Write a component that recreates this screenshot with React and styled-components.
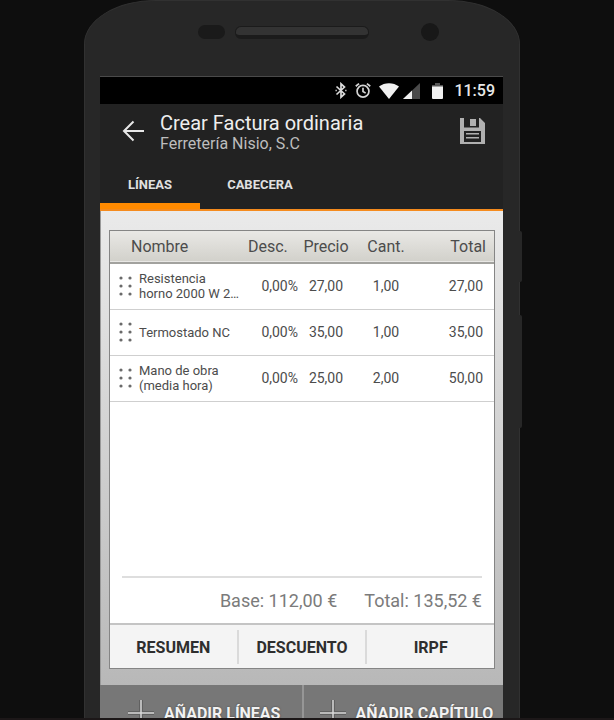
import styled, { createGlobalStyle } from "styled-components";

const GlobalStyle = createGlobalStyle`
  * {
    box-sizing: border-box;
  }

  body {
    margin: 0;
    background: #0e0e0e;
    font-family: Roboto, "Liberation Sans", sans-serif;
  }

  button {
    margin: 0;
    padding: 0;
    border: 0;
    background: none;
    font-family: inherit;
    cursor: pointer;
  }
`;

const Page = styled.div`
  height: 100vh;
  overflow: hidden;
  padding: 0 94px 0 84px;
  border-bottom: 2px solid #1c1718;
`;

const Phone = styled.div`
  position: relative;
  padding: 0 16px 0 15px;
  border: solid #313131;
  border-width: 1px 1px 0;
  border-radius: 72px 72px 0 0 / 44px 44px 0 0;
  background: #272727;
`;

const SideButton = styled.span`
  position: absolute;
  left: 100%;
  top: ${({ $top }) => $top}px;
  width: 3px;
  height: ${({ $height }) => $height}px;
  border-radius: 0 2px 2px 0;
  background: #272727;
`;

const Bezel = styled.div`
  display: flex;
  align-items: center;
  height: 75px;
  padding: 0 64px 14px 98px;
`;

const Sensor = styled.span`
  width: 27px;
  height: 14px;
  border-radius: 7px;
  background: #1a1a1a;
`;

const Speaker = styled.span`
  flex-grow: 1;
  height: 13px;
  margin: 2px 52px 0 10px;
  border: 1px solid #1b1b1b;
  border-bottom-width: 4px;
  border-radius: 6px;
  background: #333;
`;

const Camera = styled.span`
  width: 18px;
  height: 18px;
  border-radius: 50%;
  background: #181818;
`;

const Screen = styled.div`
  border-top: 1px solid #4a4a4a;
  background: #222;
`;

const StatusBar = styled.div`
  display: flex;
  justify-content: flex-end;
  align-items: center;
  height: 27px;
  padding-right: 8px;
  background: #000;
  color: #e8e8e8;
  font-size: 16px;
  font-weight: 500;

  svg {
    display: block;
  }
`;

const StatusIcons = styled.div`
  display: flex;
  align-items: center;
  gap: 8px;
  margin-right: 10px;
`;

const Network = styled.span`
  display: flex;
  gap: 4px;
`;

const AppBar = styled.header`
  display: flex;
  align-items: center;
  height: 54px;
  padding: 0 18px 0 22px;
`;

const IconButton = styled.button`
  display: block;

  svg {
    display: block;
  }
`;

const Heading = styled.div`
  flex-grow: 1;
  padding: 4px 0 0 16px;
`;

const Title = styled.h1`
  margin: 0;
  color: #eee;
  font-size: 20px;
  font-weight: 400;
  line-height: 22px;
`;

const Subtitle = styled.div`
  color: #bdbdbd;
  font-size: 16px;
  line-height: 20px;
`;

const Tabs = styled.nav`
  display: flex;
  padding-top: 8px;
  border-bottom: 2px solid #f58b1e;
`;

const Tab = styled.button`
  min-width: ${({ $active }) => ($active ? "100px" : "120px")};
  height: 43px;
  border-bottom: 6px solid ${({ $active }) => ($active ? "#ff8a00" : "transparent")};
  color: #e0e0e0;
  font-size: 13px;
  font-weight: 700;
`;

const Content = styled.main`
  padding: 19px 8px 16px;
  border-left: 1px solid #999;
  background: linear-gradient(#eaeaea, #b8b8b8);
`;

const Card = styled.section`
  display: flex;
  flex-direction: column;
  min-height: 439px;
  border: 1px solid #858585;
  background: #fff;
`;

const LinesTable = styled.table`
  width: 100%;
  border-collapse: collapse;
  table-layout: fixed;
  color: #4c4c4c;
`;

const Col = styled.col`
  width: ${({ $width }) => $width};
`;

const HeadRow = styled.tr`
  height: 32px;
  border-bottom: 2px solid #a2a29e;
  background: linear-gradient(#e9e8e5, #d2d1cb);
`;

const HeadCell = styled.th`
  padding: 0 ${({ $end }) => $end || "0"} 0 ${({ $start }) => $start || "0"};
  font-size: 16px;
  font-weight: 400;
  text-align: ${({ $align }) => $align || "center"};
`;

const Row = styled.tr`
  height: 46px;
  border-bottom: 1px solid #cfcfcf;
`;

const Cell = styled.td`
  padding: 0 ${({ $end }) => $end || "0"} 0 0;
  font-size: 14px;
  text-align: ${({ $align }) => $align || "center"};
`;

const NameCell = styled.td`
  padding: 0 7px 0 0;
  font-size: 13px;
  line-height: 15px;
`;

const Handle = styled.svg`
  display: block;
  margin-left: 8px;
`;

const Totals = styled.div`
  display: flex;
  justify-content: flex-end;
  gap: 27px;
  margin: auto 12px 0;
  border-top: 2px solid #dedede;
  color: #7b7b7b;
  font-size: 18px;
  line-height: 45px;
`;

const Actions = styled.div`
  display: flex;
  height: 45px;
  padding: 5px 0 4px;
  border-top: 2px solid #c4c4c4;
  background: #f4f4f4;
`;

const Action = styled.button`
  flex: 1;
  color: #2e2e2e;
  font-size: 16px;
  font-weight: 700;

  & + & {
    border-left: 2px solid #dadada;
  }
`;

const BottomBar = styled.footer`
  display: grid;
  grid-template-columns: 1fr 1fr;
  background: #777;
`;

const AddButton = styled.button`
  display: flex;
  align-items: center;
  gap: 10px;
  height: 56px;
  padding-left: 28px;
  color: #f2f2f2;
  font-size: 16px;
  font-weight: 700;
  text-shadow: 0 0 2px #444;
  white-space: nowrap;

  & + & {
    padding-left: 16px;
    border-left: 2px solid #969696;
  }
`;

const BluetoothIcon = () => (
  <svg width="12" height="17" viewBox="0 0 12 17" fill="none" stroke="#dcdcdc" strokeWidth="1.7">
    <path d="M1.5 4.5 9.5 12 6 15.2V1.8L9.5 5 1.5 12.5" />
    <path d="M10.2 8.5h1.3M.5 8.5h1.3" />
  </svg>
);

const AlarmIcon = () => (
  <svg width="16" height="17" viewBox="0 0 17 17" fill="none" stroke="#d4d4d4" strokeWidth="1.8">
    <circle cx="8.5" cy="9.3" r="6.3" />
    <path d="M8.5 5.5v4l2.8 1.8M.8 4 4.3 1.1M16.2 4l-3.5-2.9" />
  </svg>
);

const WifiIcon = () => (
  <svg width="20" height="16" viewBox="0 0 20 16" fill="#f0f0f0">
    <path d="M0 3.5C5.5-1 14.5-1 20 3.5L10 16z" />
  </svg>
);

const SignalIcon = () => (
  <svg width="17" height="16" viewBox="0 0 17 16">
    <path d="M17 0v16H0z" fill="#4a4a4a" />
    <path d="M9 7.5V16H0z" fill="#f0f0f0" />
  </svg>
);

const BatteryIcon = () => (
  <svg width="16" height="16" viewBox="0 0 16 16">
    <path d="M7 2V0h5v2h3v2H4V2z" fill="#555" />
    <path d="M4 3.5h11V15a1 1 0 0 1-1 1H5a1 1 0 0 1-1-1z" fill="#f0f0f0" />
  </svg>
);

const BackIcon = () => (
  <svg width="22" height="22" viewBox="0 0 22 22" fill="none" stroke="#e8e8e8" strokeWidth="2">
    <path d="M22 11H2M11.5 1.5 2 11l9.5 9.5" />
  </svg>
);

const SaveIcon = () => (
  <svg width="25" height="26" viewBox="0 0 25 26">
    <path
      fill="#b0b0b0"
      fillRule="evenodd"
      d="M0 0h4v9.5h15V0h1L25 5V26H0zM4 13v11h17V13z"
    />
    <path fill="#b0b0b0" d="M10 1h6v7h-6zM6 15h13v1.5H6zM6 19h13v1.5H6z" />
  </svg>
);

const PlusIcon = () => (
  <svg width="26" height="26" viewBox="0 0 26 26" fill="none">
    <path d="M13 0v26M0 13h26" stroke="#606060" strokeWidth="4" />
    <path d="M13 0v26M0 13h26" stroke="#d8d8d8" strokeWidth="1.5" />
  </svg>
);

const DragHandle = () => (
  <Handle width="14" height="20" viewBox="0 0 14 20" fill="#6a6a6a" aria-hidden="true">
    {[2, 10, 18].map(y => (
      <g key={y}>
        <circle cx="2" cy={y} r="1.6" />
        <circle cx="11" cy={y} r="1.6" />
      </g>
    ))}
  </Handle>
);

const lines = [
  { name: "Resistencia horno 2000 W 2…", discount: "0,00%", price: "27,00", count: "1,00", total: "27,00" },
  { name: "Termostado NC", discount: "0,00%", price: "35,00", count: "1,00", total: "35,00" },
  { name: "Mano de obra (media hora)", discount: "0,00%", price: "25,00", count: "2,00", total: "50,00" },
];

const Lines = () => (
  <LinesTable>
    <colgroup>
      <Col $width="29px" />
      <Col $width="auto" />
      <Col $width="50px" />
      <Col $width="56px" />
      <Col $width="64px" />
      <Col $width="76px" />
    </colgroup>
    <thead>
      <HeadRow>
        <HeadCell colSpan={2} $align="left" $start="21px">Nombre</HeadCell>
        <HeadCell $align="left">Desc.</HeadCell>
        <HeadCell>Precio</HeadCell>
        <HeadCell>Cant.</HeadCell>
        <HeadCell $align="right" $end="8px">Total</HeadCell>
      </HeadRow>
    </thead>
    <tbody>
      {lines.map(line => (
        <Row key={line.name}>
          <td><DragHandle /></td>
          <NameCell>{line.name}</NameCell>
          <Cell $align="right">{line.discount}</Cell>
          <Cell>{line.price}</Cell>
          <Cell>{line.count}</Cell>
          <Cell $align="right" $end="11px">{line.total}</Cell>
        </Row>
      ))}
    </tbody>
  </LinesTable>
);

const App = () => (
  <>
    <GlobalStyle />
    <Page>
      <Phone>
        <SideButton $top={230} $height={51} />
        <SideButton $top={314} $height={113} />
        <Bezel>
          <Sensor />
          <Speaker />
          <Camera />
        </Bezel>
        <Screen>
          <StatusBar>
            <StatusIcons>
              <BluetoothIcon />
              <AlarmIcon />
              <Network>
                <WifiIcon />
                <SignalIcon />
              </Network>
              <BatteryIcon />
            </StatusIcons>
            <span>11:59</span>
          </StatusBar>
          <AppBar>
            <IconButton aria-label="Volver"><BackIcon /></IconButton>
            <Heading>
              <Title>Crear Factura ordinaria</Title>
              <Subtitle>Ferretería Nisio, S.C</Subtitle>
            </Heading>
            <IconButton aria-label="Guardar"><SaveIcon /></IconButton>
          </AppBar>
          <Tabs>
            <Tab $active>LÍNEAS</Tab>
            <Tab>CABECERA</Tab>
          </Tabs>
          <Content>
            <Card>
              <Lines />
              <Totals>
                <span>Base: 112,00 €</span>
                <span>Total: 135,52 €</span>
              </Totals>
              <Actions>
                <Action>RESUMEN</Action>
                <Action>DESCUENTO</Action>
                <Action>IRPF</Action>
              </Actions>
            </Card>
          </Content>
          <BottomBar>
            <AddButton><PlusIcon />AÑADIR LÍNEAS</AddButton>
            <AddButton><PlusIcon />AÑADIR CAPÍTULO</AddButton>
          </BottomBar>
        </Screen>
      </Phone>
    </Page>
  </>
);

export default App;
